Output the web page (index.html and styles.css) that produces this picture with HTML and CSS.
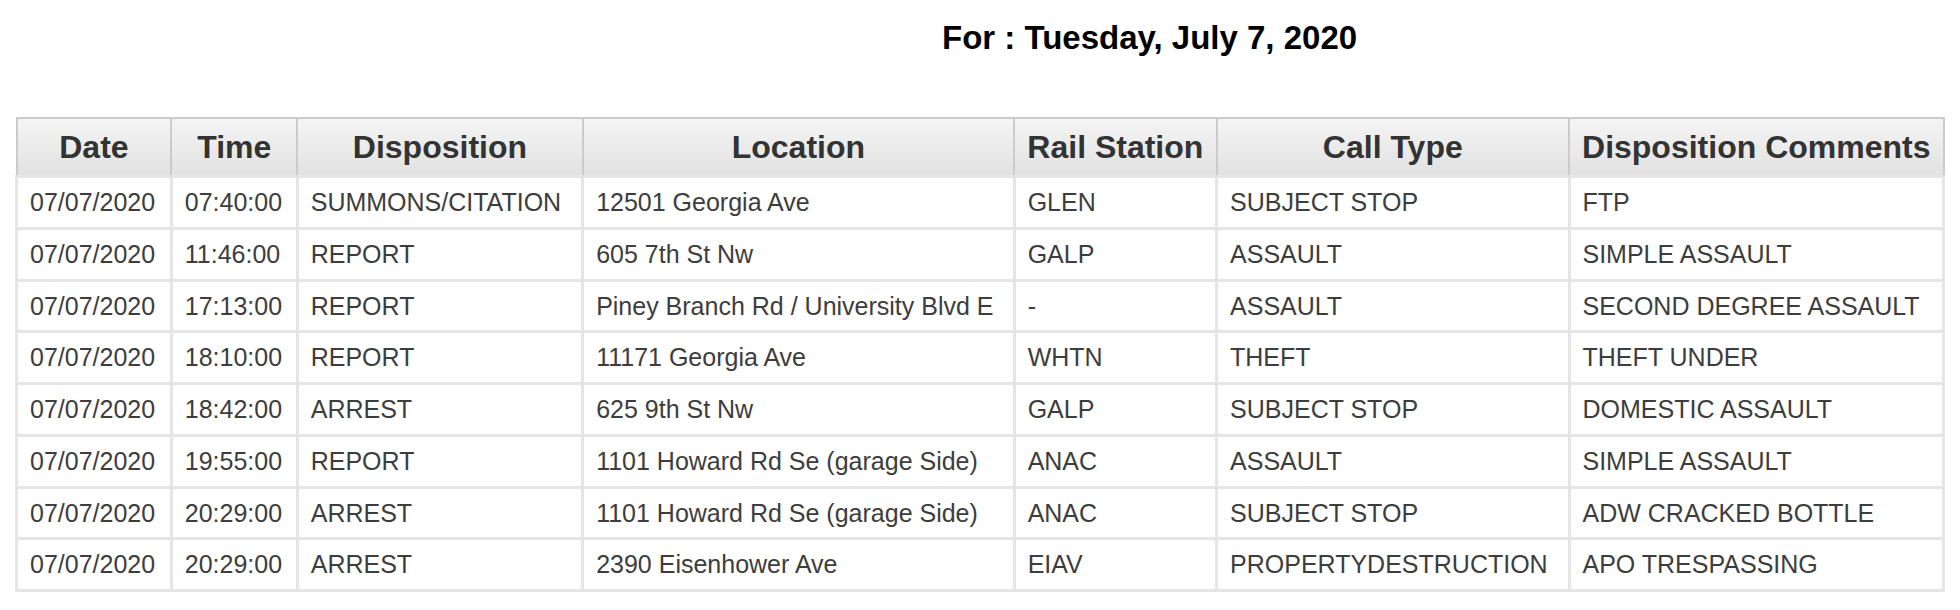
FILE: index.html
```html
<!DOCTYPE html>
<html>
<head>
<meta charset="utf-8">
<link rel="stylesheet" href="styles.css">
</head>
<body>
<div class="page">
  <h1 class="title">For : Tuesday, July 7, 2020</h1>
  <table class="report">
    <colgroup>
      <col class="c-date"><col class="c-time"><col class="c-disp"><col class="c-loc"><col class="c-rail"><col class="c-call"><col class="c-comm">
    </colgroup>
    <thead>
      <tr>
        <th>Date</th><th>Time</th><th>Disposition</th><th>Location</th><th>Rail Station</th><th>Call Type</th><th>Disposition Comments</th>
      </tr>
    </thead>
    <tbody>
      <tr><td>07/07/2020</td><td>07:40:00</td><td>SUMMONS/CITATION</td><td>12501 Georgia Ave</td><td>GLEN</td><td>SUBJECT STOP</td><td>FTP</td></tr>
      <tr><td>07/07/2020</td><td>11:46:00</td><td>REPORT</td><td>605 7th St Nw</td><td>GALP</td><td>ASSAULT</td><td>SIMPLE ASSAULT</td></tr>
      <tr><td>07/07/2020</td><td>17:13:00</td><td>REPORT</td><td>Piney Branch Rd / University Blvd E</td><td>-</td><td>ASSAULT</td><td>SECOND DEGREE ASSAULT</td></tr>
      <tr><td>07/07/2020</td><td>18:10:00</td><td>REPORT</td><td>11171 Georgia Ave</td><td>WHTN</td><td>THEFT</td><td>THEFT UNDER</td></tr>
      <tr><td>07/07/2020</td><td>18:42:00</td><td>ARREST</td><td>625 9th St Nw</td><td>GALP</td><td>SUBJECT STOP</td><td>DOMESTIC ASSAULT</td></tr>
      <tr><td>07/07/2020</td><td>19:55:00</td><td>REPORT</td><td>1101 Howard Rd Se (garage Side)</td><td>ANAC</td><td>ASSAULT</td><td>SIMPLE ASSAULT</td></tr>
      <tr><td>07/07/2020</td><td>20:29:00</td><td>ARREST</td><td>1101 Howard Rd Se (garage Side)</td><td>ANAC</td><td>SUBJECT STOP</td><td>ADW CRACKED BOTTLE</td></tr>
      <tr><td>07/07/2020</td><td>20:29:00</td><td>ARREST</td><td>2390 Eisenhower Ave</td><td>EIAV</td><td>PROPERTYDESTRUCTION</td><td>APO TRESPASSING</td></tr>
    </tbody>
  </table>
</div>
</body>
</html>
```

FILE: styles.css
```css
html, body {
  margin: 0;
  padding: 0;
  background: #fff;
}
body {
  font-family: "Liberation Sans", Arial, sans-serif;
}
.page {
  padding: 19px 15px 0 15px;
}
.title {
  margin: 0 0 60px 0;
  padding-left: 927px;
  font-size: 33px;
  line-height: 38px;
  font-weight: bold;
  color: #000;
}
.report {
  width: 100%;
  border-collapse: collapse;
}
.c-date { width: 155px; }
.c-time { width: 126px; }
.c-disp { width: 286px; }
.c-loc  { width: 432px; }
.c-rail { width: 203px; }
.c-call { width: 353px; }
.c-comm { width: 375px; }
.report th {
  font-size: 32px;
  font-weight: bold;
  color: #333;
  text-align: center;
  padding: 10px 8px;
  line-height: 36px;
  background: linear-gradient(#f4f4f4, #e2e2e2);
  border: 2px solid #cbcbcb;
  white-space: nowrap;
}
.report td {
  font-size: 25px;
  color: #3d3d3d;
  text-align: left;
  padding: 10px 12px;
  line-height: 28.75px;
  border: 3px solid #e5e5e5;
  white-space: nowrap;
}
```
